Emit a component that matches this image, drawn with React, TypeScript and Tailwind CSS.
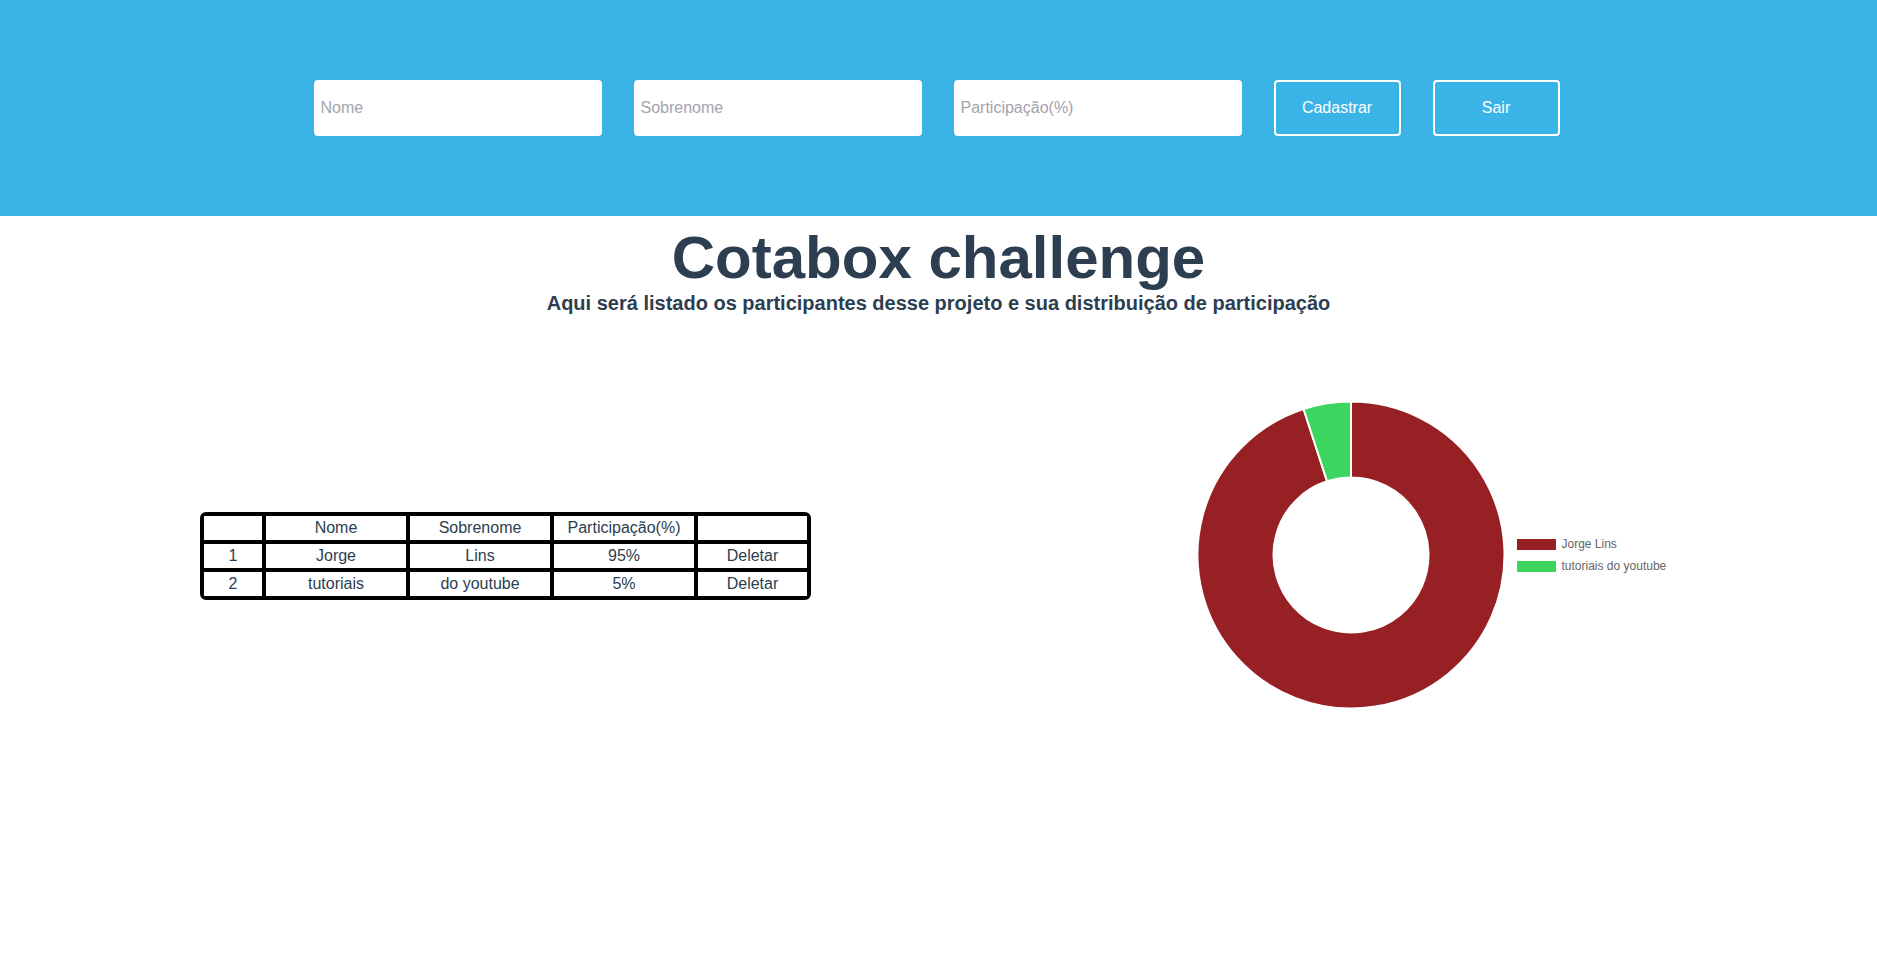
import React from "react";

const R = 153.5;
const r = 77.5;
const C = 154;

function pt(rad: number, deg: number) {
  const a = ((deg - 90) * Math.PI) / 180;
  return [C + rad * Math.cos(a), C + rad * Math.sin(a)];
}

function arc(start: number, end: number) {
  const large = end - start > 180 ? 1 : 0;
  const [x1, y1] = pt(R, start);
  const [x2, y2] = pt(R, end);
  const [x3, y3] = pt(r, end);
  const [x4, y4] = pt(r, start);
  return `M ${x1} ${y1} A ${R} ${R} 0 ${large} 1 ${x2} ${y2} L ${x3} ${y3} A ${r} ${r} 0 ${large} 0 ${x4} ${y4} Z`;
}

const rows = [
  { id: 1, nome: "Jorge", sobrenome: "Lins", p: "95%" },
  { id: 2, nome: "tutoriais", sobrenome: "do youtube", p: "5%" },
];

export default function App() {
  const cell = "border-2 border-black h-[28px] text-center align-middle p-0";
  return (
    <div className="min-h-screen bg-white font-['Liberation_Sans',Arial,sans-serif] text-[#2c3e50]">
      <header className="bg-[#3ab4e6] h-[216px] flex items-center justify-center gap-[32px] pr-[4px]">
        <input
          placeholder="Nome"
          className="w-[288px] h-[56px] bg-white rounded px-[7px] text-[16px] outline-none placeholder:text-[#a3a3ad]"
        />
        <input
          placeholder="Sobrenome"
          className="w-[288px] h-[56px] bg-white rounded px-[7px] text-[16px] outline-none placeholder:text-[#a3a3ad]"
        />
        <input
          placeholder="Participação(%)"
          className="w-[288px] h-[56px] bg-white rounded px-[7px] text-[16px] outline-none placeholder:text-[#a3a3ad]"
        />
        <button className="w-[127px] h-[56px] border-2 border-white rounded text-white text-[16px] bg-transparent">
          Cadastrar
        </button>
        <button className="w-[127px] h-[56px] border-2 border-white rounded text-white text-[16px] bg-transparent">
          Sair
        </button>
      </header>

      <h1 className="text-center font-bold text-[60px] leading-[69px] mt-[7px]">Cotabox challenge</h1>
      <h3 className="text-center font-bold text-[20px] leading-[23px]">
        Aqui será listado os participantes desse projeto e sua distribuição de participação
      </h3>

      <div className="flex items-center mt-[86px]">
        <div className="w-1/2 pl-[200px] pt-[2px]">
          <table className="border-separate border-spacing-0 border-2 border-black rounded-md text-[16px] leading-[18px]">
            <thead>
              <tr>
                <th className={`${cell} w-[62px] font-normal`}></th>
                <th className={`${cell} w-[144px] font-normal`}>Nome</th>
                <th className={`${cell} w-[144px] font-normal`}>Sobrenome</th>
                <th className={`${cell} w-[144px] font-normal`}>Participação(%)</th>
                <th className={`${cell} w-[113px] font-normal`}></th>
              </tr>
            </thead>
            <tbody>
              {rows.map((row) => (
                <tr key={row.id}>
                  <td className={cell}>{row.id}</td>
                  <td className={cell}>{row.nome}</td>
                  <td className={cell}>{row.sobrenome}</td>
                  <td className={cell}>{row.p}</td>
                  <td className={cell}>Deletar</td>
                </tr>
              ))}
            </tbody>
          </table>
        </div>
        <div className="w-1/2 flex items-center pl-[258px]">
          <svg width="308" height="308" viewBox="0 0 308 308">
            <path d={arc(0, 342)} fill="#962024" stroke="#ffffff" strokeWidth="2" />
            <path d={arc(342, 360)} fill="#3bd55f" stroke="#ffffff" strokeWidth="2" />
          </svg>
          <div className="ml-[12px] flex flex-col gap-[10px] text-[12px] leading-[12px] text-[#666666]">
            <div className="flex items-center gap-[6px]">
              <span className="w-[39px] h-[11px] bg-[#962024]" />
              <span>Jorge Lins</span>
            </div>
            <div className="flex items-center gap-[6px]">
              <span className="w-[39px] h-[11px] bg-[#3bd55f]" />
              <span>tutoriais do youtube</span>
            </div>
          </div>
        </div>
      </div>
    </div>
  );
}
